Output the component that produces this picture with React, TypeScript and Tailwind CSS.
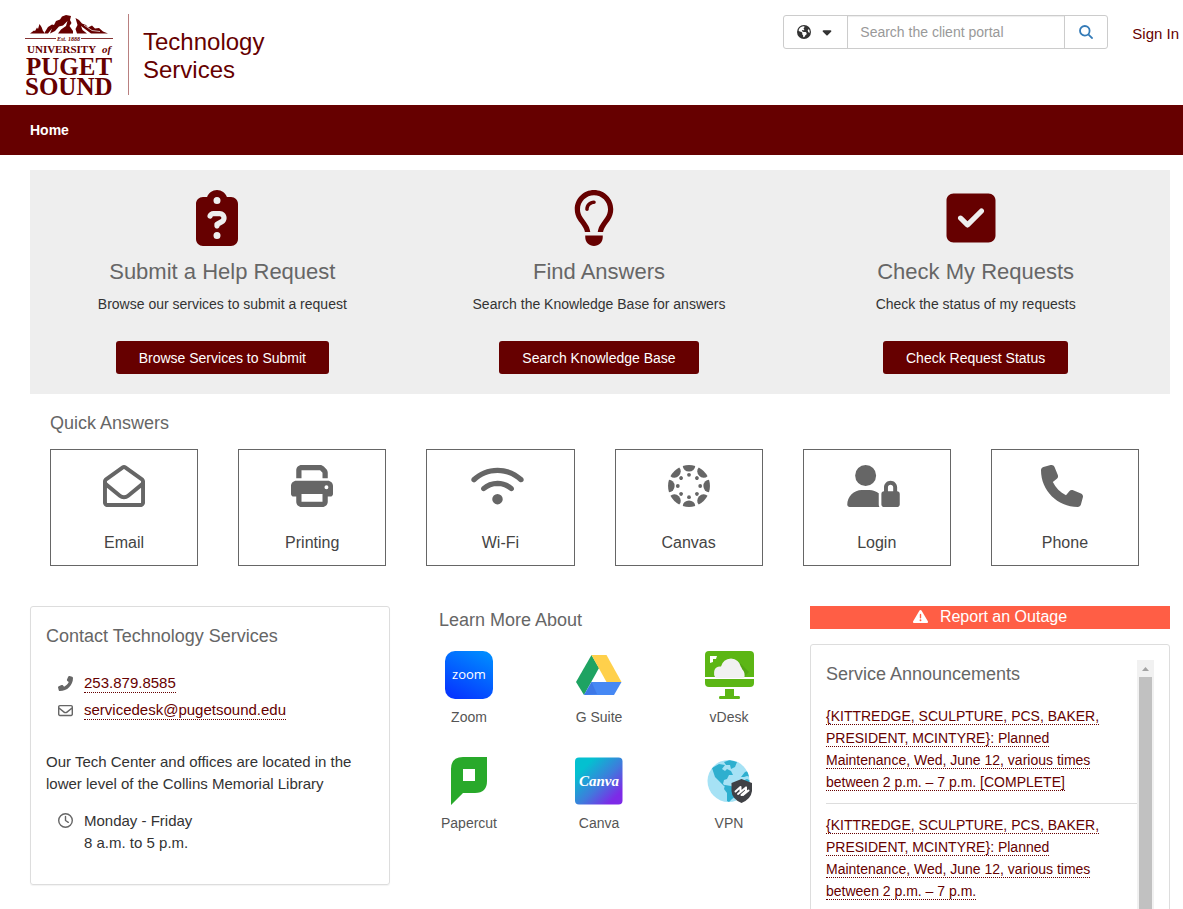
import type { ReactNode } from "react";
import {
  FaCaretDown,
  FaClipboardQuestion,
  FaEarthAmericas,
  FaPhone,
  FaPhoneFlip,
  FaPrint,
  FaRegClock,
  FaRegEnvelope,
  FaRegEnvelopeOpen,
  FaRegLightbulb,
  FaSquareCheck,
  FaTriangleExclamation,
  FaUserLock,
  FaWifi,
} from "react-icons/fa6";

interface HeroItem {
  icon: ReactNode;
  title: string;
  text: string;
  action: string;
}

const heroItems: HeroItem[] = [
  {
    icon: <FaClipboardQuestion size={56} />,
    title: "Submit a Help Request",
    text: "Browse our services to submit a request",
    action: "Browse Services to Submit",
  },
  {
    icon: <FaRegLightbulb size={56} />,
    title: "Find Answers",
    text: "Search the Knowledge Base for answers",
    action: "Search Knowledge Base",
  },
  {
    icon: <FaSquareCheck size={56} />,
    title: "Check My Requests",
    text: "Check the status of my requests",
    action: "Check Request Status",
  },
];

const quickAnswers = [
  { label: "Email", icon: <FaRegEnvelopeOpen size={42} /> },
  { label: "Printing", icon: <FaPrint size={42} /> },
  { label: "Wi-Fi", icon: <FaWifi className="mr-1.5 h-[42px] w-[53px]" /> },
  { label: "Canvas", icon: <CanvasIcon /> },
  { label: "Login", icon: <FaUserLock className="mr-1.5 h-[42px] w-[53px]" /> },
  { label: "Phone", icon: <FaPhone size={42} className="mr-1.5" /> },
];

const learnMore = [
  { label: "Zoom", icon: <ZoomLogo /> },
  { label: "G Suite", icon: <DriveLogo /> },
  { label: "vDesk", icon: <VDeskLogo /> },
  { label: "Papercut", icon: <PapercutLogo /> },
  { label: "Canva", icon: <CanvaLogo /> },
  { label: "VPN", icon: <VpnLogo /> },
];

const announcements = [
  "{KITTREDGE, SCULPTURE, PCS, BAKER, PRESIDENT, MCINTYRE}: Planned Maintenance, Wed, June 12, various times between 2 p.m. – 7 p.m. [COMPLETE]",
  "{KITTREDGE, SCULPTURE, PCS, BAKER, PRESIDENT, MCINTYRE}: Planned Maintenance, Wed, June 12, various times between 2 p.m. – 7 p.m.",
];

export default function App() {
  return (
    <div className="h-screen overflow-hidden bg-white font-['Liberation_Sans',Arial,sans-serif] text-sm text-[#333]">
      <Header />
      <nav className="flex h-[50px] items-center bg-[#660000] px-[30px]">
        <a href="#" className="font-bold text-white">
          Home
        </a>
      </nav>
      <main className="pt-[15px] pr-[13px] pl-[30px]">
        <Hero />
        <QuickAnswers />
        <div className="mt-10 grid grid-cols-3 items-start gap-[30px]">
          <ContactCard />
          <LearnMore />
          <Announcements />
        </div>
      </main>
    </div>
  );
}

function Header() {
  return (
    <header className="flex h-[105px] items-start justify-between pr-1 pl-[25px]">
      <a href="#" className="flex items-start pt-[14px] text-[#660000]">
        <PugetSoundLogo />
        <span className="ml-[15px] h-[81px] w-px bg-[#b98080]" />
        <span className="ml-[14px] pt-[14px] text-2xl leading-7">
          Technology
          <br />
          Services
        </span>
      </a>
      <div className="flex items-center pt-[15px]">
        <form className="flex h-[34px] rounded-[3px] border border-[#ccc]">
          <button type="button" aria-label="Filter your search" className="flex w-[63px] items-center justify-center gap-[9px]">
            <FaEarthAmericas size={14} />
            <FaCaretDown size={14} />
          </button>
          <input
            type="text"
            aria-label="Search the client portal"
            placeholder="Search the client portal"
            className="w-[218px] border-x border-[#ccc] px-3 shadow-[inset_0_1px_1px_rgba(0,0,0,0.075)] outline-none placeholder:text-[#999]"
          />
          <button type="submit" aria-label="Search" className="flex w-[42px] items-center justify-center text-[#337ab7]">
            <svg width="14" height="14" viewBox="0 0 14 14" fill="none" stroke="currentColor" strokeWidth="1.8">
              <circle cx="5.8" cy="5.8" r="4.8" />
              <path d="M9.3 9.3l4.3 4.3" />
            </svg>
          </button>
        </form>
        <a href="#" className="ml-6 pt-1 text-[15px] text-[#660000]">
          Sign In
        </a>
      </div>
    </header>
  );
}

function PugetSoundLogo() {
  return (
    <svg width="88" height="90" viewBox="0 0 88 90" fill="currentColor" fontFamily="'Liberation Serif', serif" fontWeight="bold">
      {/* mountain range */}
      <path d="M5 19.500L9 16.500L10 17L12 13.500L13 15L14.500 10L16.500 13L18 17L19 18V19.500Z" />
      <path d="M19 19.500L23 13L27 10.500L29 11L31 7L35 5.500L37 2.500L41 1L46 2L45 6L46.500 9L44.500 12L48 17V19.500H33L36 15.500L41 12L42.500 7L38 11.500L34 12.500L30 17L25 19.500L27 14.500L23 19.500Z" />
      <path d="M52 19.500L50.500 15L52.500 11L50.500 4L54 6L57 9.500L61 11L63 13.500L67 11.500L70 14.500L74 14L78 17.500L83 19.500H66L56 12L57.500 16L62 19.500Z" />
      <path d="M59 11L67 16.500L75 17.500" stroke="#fff" strokeWidth="0.7" fill="none" />
      <path d="M0 24.500H31M56 24.500H88" stroke="currentColor" strokeWidth="0.8" />
      <text x="43.500" y="27" fontSize="6" fontStyle="italic" textAnchor="middle">
        Est. 1888
      </text>
      <text x="2" y="39" fontSize="11">
        UNIVERSITY
      </text>
      <text x="77" y="39" fontSize="11" fontStyle="italic">
        of
      </text>
      <text x="1" y="61" fontSize="25">
        PUGET
      </text>
      <text x="0" y="81" fontSize="25">
        SOUND
      </text>
    </svg>
  );
}

function Hero() {
  return (
    <section className="grid h-56 grid-cols-3 bg-[#eee] pt-5 pr-1.5 pl-1 text-center">
      {heroItems.map((item) => (
        <div key={item.title} className="flex flex-col items-center">
          <div className="mr-[10px] text-[#660000]">{item.icon}</div>
          <h2 className="mt-3 text-[22px] leading-7 text-[#666]">{item.title}</h2>
          <p className="mt-2 leading-5">{item.text}</p>
          <a href="#" className="mt-[27px] rounded-[3px] bg-[#660000] px-[23px] pt-2 pb-1.5 leading-[19px] text-white">
            {item.action}
          </a>
        </div>
      ))}
    </section>
  );
}

function QuickAnswers() {
  return (
    <section className="pt-[19px] pr-[31px] pl-5">
      <h2 className="text-lg leading-5 text-[#666]">Quick Answers</h2>
      <div className="mt-4 grid grid-cols-6 gap-10">
        {quickAnswers.map((item) => (
          <a key={item.label} href="#" className="flex h-[117px] flex-col items-center border border-[#666] pt-[15px] text-[#666]">
            {item.icon}
            <span className="mt-6 text-base leading-6 text-[#444]">{item.label}</span>
          </a>
        ))}
      </div>
    </section>
  );
}

function ContactCard() {
  return (
    <section className="h-[279px] rounded-[3px] border border-[#ddd] px-[15px] pt-[19px] text-[15px] leading-[22px] shadow-[0_1px_1px_rgba(0,0,0,0.05)]">
      <h2 className="text-lg leading-5 text-[#666]">Contact Technology Services</h2>
      <ul className="mt-[26px] flex flex-col gap-[5px] pl-3">
        <li className="flex h-[22px] items-center">
          <FaPhoneFlip size={15} className="mr-[11px] text-[#666]" />
          <a href="#" className="border-b border-dotted border-[#660000] leading-[18px] text-[#660000]">
            253.879.8585
          </a>
        </li>
        <li className="flex h-[22px] items-center">
          <FaRegEnvelope size={15} className="mr-[11px] text-[#666]" />
          <a href="#" className="border-b border-dotted border-[#660000] leading-[18px] text-[#660000]">
            servicedesk@pugetsound.edu
          </a>
        </li>
      </ul>
      <p className="mt-[30px]">Our Tech Center and offices are located in the lower level of the Collins Memorial Library</p>
      <div className="mt-[15px] flex pl-3">
        <FaRegClock size={15} className="mt-[3px] mr-[11px] text-[#666]" />
        <p>
          Monday - Friday
          <br />8 a.m. to 5 p.m.
        </p>
      </div>
    </section>
  );
}

function LearnMore() {
  return (
    <section className="pt-1 pr-[21px] pl-[19px]">
      <h2 className="text-lg leading-5 text-[#666]">Learn More About</h2>
      <div className="mt-[21px] grid grid-cols-[60px_60px_60px] justify-between gap-y-7">
        {learnMore.map((item) => (
          <a key={item.label} href="#" className="flex flex-col items-center text-[#555]">
            {item.icon}
            <span className="mt-2 mb-0.5 leading-5">{item.label}</span>
          </a>
        ))}
      </div>
    </section>
  );
}

function Announcements() {
  return (
    <section>
      <a href="#" className="flex h-[23px] items-center justify-center gap-3 bg-[#ff5e45] pb-0.5 text-base text-white">
        <FaTriangleExclamation size={15} />
        Report an Outage
      </a>
      <div className="mt-[15px] h-[500px] rounded-[3px] border border-[#ddd] p-[15px]">
        <div className="flex h-full">
          <div className="min-w-0 flex-1">
            <h2 className="pt-1 text-lg leading-5 text-[#666]">Service Announcements</h2>
            <ul className="mt-[11px] leading-[22px]">
              {announcements.map((text) => (
                <li key={text} className="border-b border-[#ddd] py-[10px]">
                  <p className="pr-6">
                    <a href="#" className="border-b border-dotted border-[#660000] text-[#660000]">
                      {text}
                    </a>
                  </p>
                </li>
              ))}
            </ul>
          </div>
          <div className="flex w-[17px] flex-col items-center bg-[#f1f1f1]">
            <svg width="17" height="17" className="shrink-0" fill="#a3a3a3">
              <path d="M5 11L8.5 7L12 11Z" />
            </svg>
            <div className="w-[13px] flex-1 bg-[#c1c1c1]" />
          </div>
        </div>
      </div>
    </section>
  );
}

/* Ring of eight caps and eight dots */
function CanvasIcon() {
  const angles = [0, 45, 90, 135, 180, 225, 270, 315];
  return (
    <svg width="42" height="42" viewBox="0 0 42 42" fill="currentColor">
      {angles.map((angle) => (
        <g key={angle} transform={`rotate(${angle} 21 21)`}>
          <path d="M14.8 1A21 21 0 0 1 27.2 1A6.2 5.6 0 0 1 14.8 1Z" />
          <circle cx="21" cy="9.8" r="1.9" />
        </g>
      ))}
    </svg>
  );
}

function ZoomLogo() {
  return (
    <svg width="48" height="48" viewBox="0 0 48 48">
      <defs>
        <linearGradient id="zoom-bg" x1="0.3" y1="1" x2="0.8" y2="0">
          <stop offset="0" stopColor="#0637ff" />
          <stop offset="1" stopColor="#008cff" />
        </linearGradient>
      </defs>
      <rect width="48" height="48" rx="10" fill="url(#zoom-bg)" />
      <text x="24" y="28" textAnchor="middle" fontFamily="'Open Sans', sans-serif" fontWeight="500" fontSize="13" fill="#fff">
        zoom
      </text>
    </svg>
  );
}

function DriveLogo() {
  return (
    <svg width="48" height="48" viewBox="0 0 48 48">
      <path d="M16.500 4L24 17L9 44L1 31Z" fill="#1ea362" />
      <path d="M16.500 4H31.500L46.500 31H31.500Z" fill="#ffd04b" />
      <path d="M16.500 31H46.500L39 44H9Z" fill="#4688f4" />
      <path d="M16.500 31L22 43L9 44Z" fill="#3367d6" opacity="0.45" />
    </svg>
  );
}

function VDeskLogo() {
  return (
    <svg width="49" height="48" viewBox="0 0 49 48">
      <path d="M4 0H45Q49 0 49 4V26H0V4Q0 0 4 0Z" fill="#5cb615" />
      <path d="M35 12L44 21L39 26H30Z" fill="#4a9c10" opacity="0.6" />
      <path d="M11 27Q8 24 9.500 19Q11 15 16 15.500Q18 8 26 7.500Q34 8 36 16Q37 17 37 18Q41 22 39 27Z" fill="#f1f1f1" />
      <path d="M5 12V5H12L11 8H8V11Z" fill="#fff" />
      <path d="M0 28H49V32Q49 36 45 36H4Q0 36 0 32Z" fill="#5cb615" />
      <path d="M20 38H29V45H34Q35 45 35 46.500Q35 48 34 48H15Q14 48 14 46.500Q14 45 15 45H20Z" fill="#5cb615" />
    </svg>
  );
}

function PapercutLogo() {
  return (
    <svg width="48" height="48" viewBox="0 0 48 48">
      <path d="M6 48V12Q6 0 18 0H42V24Q42 36 30 36H18ZM18 12V24H30V12Z" fill="#28a92a" fillRule="evenodd" />
    </svg>
  );
}

function CanvaLogo() {
  return (
    <svg width="48" height="48" viewBox="0 0 48 48">
      <defs>
        <linearGradient id="canva-bg" x1="0" y1="0" x2="1" y2="1">
          <stop offset="0.2" stopColor="#04c0d0" />
          <stop offset="0.55" stopColor="#3f7bdc" />
          <stop offset="0.85" stopColor="#7d2ae7" />
        </linearGradient>
      </defs>
      <rect y="0.500" width="47.500" height="47" rx="4" fill="url(#canva-bg)" />
      <text x="24" y="29" textAnchor="middle" fontFamily="'Liberation Serif', serif" fontStyle="italic" fontWeight="bold" fontSize="15" fill="#fff">
        Canva
      </text>
    </svg>
  );
}

function VpnLogo() {
  return (
    <svg width="48" height="48" viewBox="0 0 48 48">
      <defs>
        <clipPath id="globe-clip">
          <circle cx="23.500" cy="24" r="21" />
        </clipPath>
      </defs>
      <circle cx="23.500" cy="24" r="21" fill="#a6e2f5" />
      <g clipPath="url(#globe-clip)" fill="#2eafcf">
        <path d="M7 11L14 7L20 8L17 12L20 14L22 12L26 14L28 18L24 18L22 22L19 23L18 27L22 30L19 29L14 24L10 20Z" />
        <path d="M19 5L25 3L32 5L30 10L26 12L25 8L21 8Z" />
        <path d="M20 28L26 29L33 33L31 39L27 42L24 45L22 44L22 36L19 32Z" />
        <path d="M36 20L40 15L43 14L46 20L42 19L39 20ZM37 24L42 22L46 24V30L41 27Z" />
      </g>
      <path d="M36.500 22L47 26V34Q46 42 36.500 46Q27 42 26.500 34V26Z" fill="#3f4145" />
      <path d="M30.500 34.500L35.500 30V35L41 30.500M33 37L35.500 35M38 38L43.500 33.500M36.500 38L41 34V30.500" stroke="#fff" strokeWidth="2" strokeLinecap="round" strokeLinejoin="round" fill="none" />
    </svg>
  );
}
